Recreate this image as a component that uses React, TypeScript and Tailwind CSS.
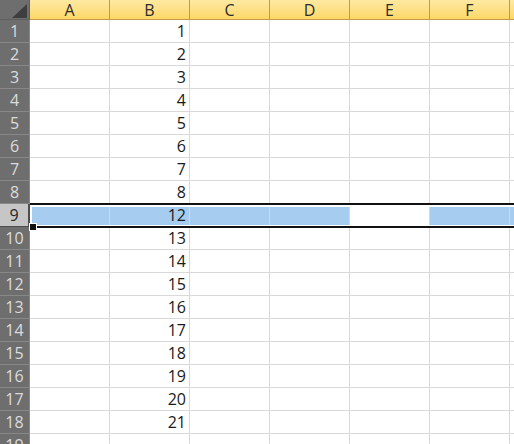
import React from "react";

const cols = ["A", "B", "C", "D", "E", "F", "G"];
const values: Record<number, string> = {
  1: "1", 2: "2", 3: "3", 4: "4", 5: "5", 6: "6", 7: "7", 8: "8",
  9: "12", 10: "13", 11: "14", 12: "15", 13: "16", 14: "17", 15: "18",
  16: "19", 17: "20", 18: "21",
};
const rows = Array.from({ length: 19 }, (_, i) => i + 1);

export default function App() {
  return (
    <div className="relative h-[444px] w-[514px] overflow-hidden bg-white font-['Open_Sans',sans-serif] text-[16px] text-[#1a1a1a]">
      {/* column headers */}
      <div className="flex h-[20px]">
        <div className="relative w-[30px] shrink-0 border-r border-b border-[#5e5e5e] bg-[#6e6e6e]">
          <svg className="absolute left-[12px] top-[4px]" width="15" height="14" viewBox="0 0 15 14">
            <polygon points="15,0 15,14 0,14" fill="#3e3e3e" />
          </svg>
        </div>
        {cols.map((c) => (
          <div
            key={c}
            className="flex w-[80px] shrink-0 items-center justify-center border-r border-b border-[#c29b45] bg-gradient-to-b from-[#fee9a2] to-[#fdd766] text-[16px] leading-none text-[#2c2c2c]"
          >
            {c}
          </div>
        ))}
      </div>

      {rows.map((r) => {
        const sel = r === 9;
        return (
          <div key={r} className="flex h-[23px]">
            <div
              className={
                sel
                  ? "flex w-[30px] shrink-0 items-center justify-center border-r-2 border-b border-[#4e4e4e] bg-[#c6c6c6] text-[16px] text-[#262626]"
                  : "flex w-[30px] shrink-0 items-center justify-center border-r border-b border-[#888888] bg-[#6e6e6e] text-[16px] text-[#dcdcdc]"
              }
            >
              {r}
            </div>
            {cols.map((c) => {
              const blue = sel && c !== "E";
              return (
                <div
                  key={c}
                  className={
                    blue
                      ? "flex w-[80px] shrink-0 items-end justify-end border-r border-b border-[#c6dcf0] bg-[#a6cdf0] pr-[3px] pb-[1px] leading-[20px]"
                      : "flex w-[80px] shrink-0 items-end justify-end border-r border-b border-[#d9d9d9] pr-[3px] pb-[1px] leading-[20px]"
                  }
                >
                  {c === "B" ? values[r] : ""}
                </div>
              );
            })}
          </div>
        );
      })}

      {/* selection outline over row 9 */}
      <div className="pointer-events-none absolute left-[30px] right-0 top-[203px] h-[25px] border-y-2 border-[#111111]">
        <div className="h-full border-y-2 border-l-2 border-white border-b-[1px]" />
      </div>
      <div className="pointer-events-none absolute left-[29px] top-[223px] h-[8px] w-[8px] border border-white bg-[#111111]" />
    </div>
  );
}
